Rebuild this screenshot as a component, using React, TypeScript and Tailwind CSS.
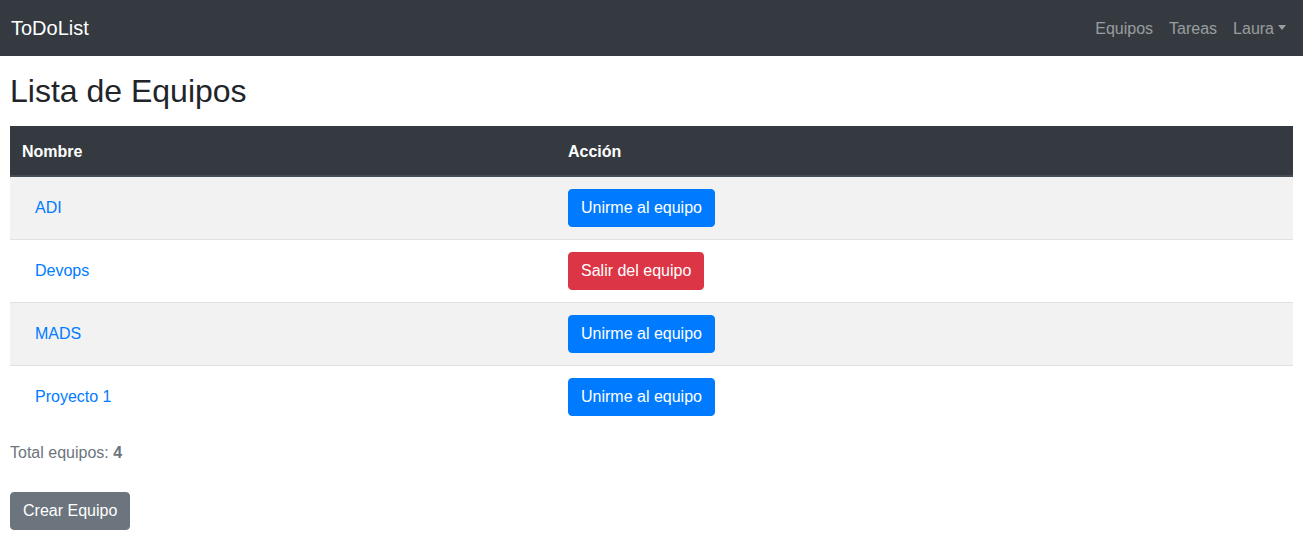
import React from "react";

type Team = {
  name: string;
  member: boolean;
};

const teams: Team[] = [
  { name: "ADI", member: false },
  { name: "Devops", member: true },
  { name: "MADS", member: false },
  { name: "Proyecto 1", member: false },
];

function Navbar() {
  return (
    <nav className="h-14 bg-[#343a40] flex items-center justify-between pl-[10px] pr-[9px]">
      <a href="#" className="text-white text-xl leading-[30px] pl-[1px]">
        ToDoList
      </a>
      <div className="flex items-center text-[rgba(255,255,255,0.5)] text-base pt-[1px]">
        <a href="#" className="px-2 py-2">
          Equipos
        </a>
        <a href="#" className="px-2 py-2">
          Tareas
        </a>
        <a href="#" className="px-2 py-2 flex items-center">
          Laura
          {/* dropdown caret */}
          <span className="ml-[4px] mb-[3px] inline-block w-0 h-0 border-t-[5px] border-t-current border-x-[4.8px] border-x-transparent" />
        </a>
      </div>
    </nav>
  );
}

export default function App() {
  return (
    <div
      className="min-h-[535px] bg-white text-[#212529] text-base leading-6"
      style={{ fontFamily: '"Liberation Sans", Arial, sans-serif' }}
    >
      <Navbar />

      <div className="px-[10px]">
        <h2 className="mt-4 mb-4 text-[32px] leading-[38px] font-medium">
          Lista de Equipos
        </h2>

        <table className="w-full border-collapse">
          <thead>
            <tr className="bg-[#343a40] text-white">
              <th className="w-[546px] text-left font-bold px-3 pt-[14px] pb-[11px] border-b-2 border-[#454d55]">
                Nombre
              </th>
              <th className="text-left font-bold px-3 pt-[14px] pb-[11px] border-b-2 border-[#454d55]">
                Acción
              </th>
            </tr>
          </thead>
          <tbody>
            {teams.map((team, i) => (
              <tr
                key={team.name}
                className={`${i % 2 === 0 ? "bg-[#f2f2f2]" : "bg-white"} ${
                  i > 0 ? "border-t border-[#dee2e6]" : ""
                }`}
              >
                <td className="px-3 py-3 align-top">
                  <a
                    href="#"
                    className="inline-block px-3 py-[6px] border border-transparent text-[#007bff]"
                  >
                    {team.name}
                  </a>
                </td>
                <td className="px-3 py-3 align-top">
                  {team.member ? (
                    <button className="px-3 py-[6px] rounded border border-[#dc3545] bg-[#dc3545] text-white">
                      Salir del equipo
                    </button>
                  ) : (
                    <button className="px-3 py-[6px] rounded border border-[#007bff] bg-[#007bff] text-white">
                      Unirme al equipo
                    </button>
                  )}
                </td>
              </tr>
            ))}
          </tbody>
        </table>

        <p className="mt-[13px] text-[#6c757d]">
          Total equipos: <b>4</b>
        </p>

        <button className="mt-[27px] px-3 py-[6px] rounded border border-[#6c757d] bg-[#6c757d] text-white">
          Crear Equipo
        </button>
      </div>
    </div>
  );
}
